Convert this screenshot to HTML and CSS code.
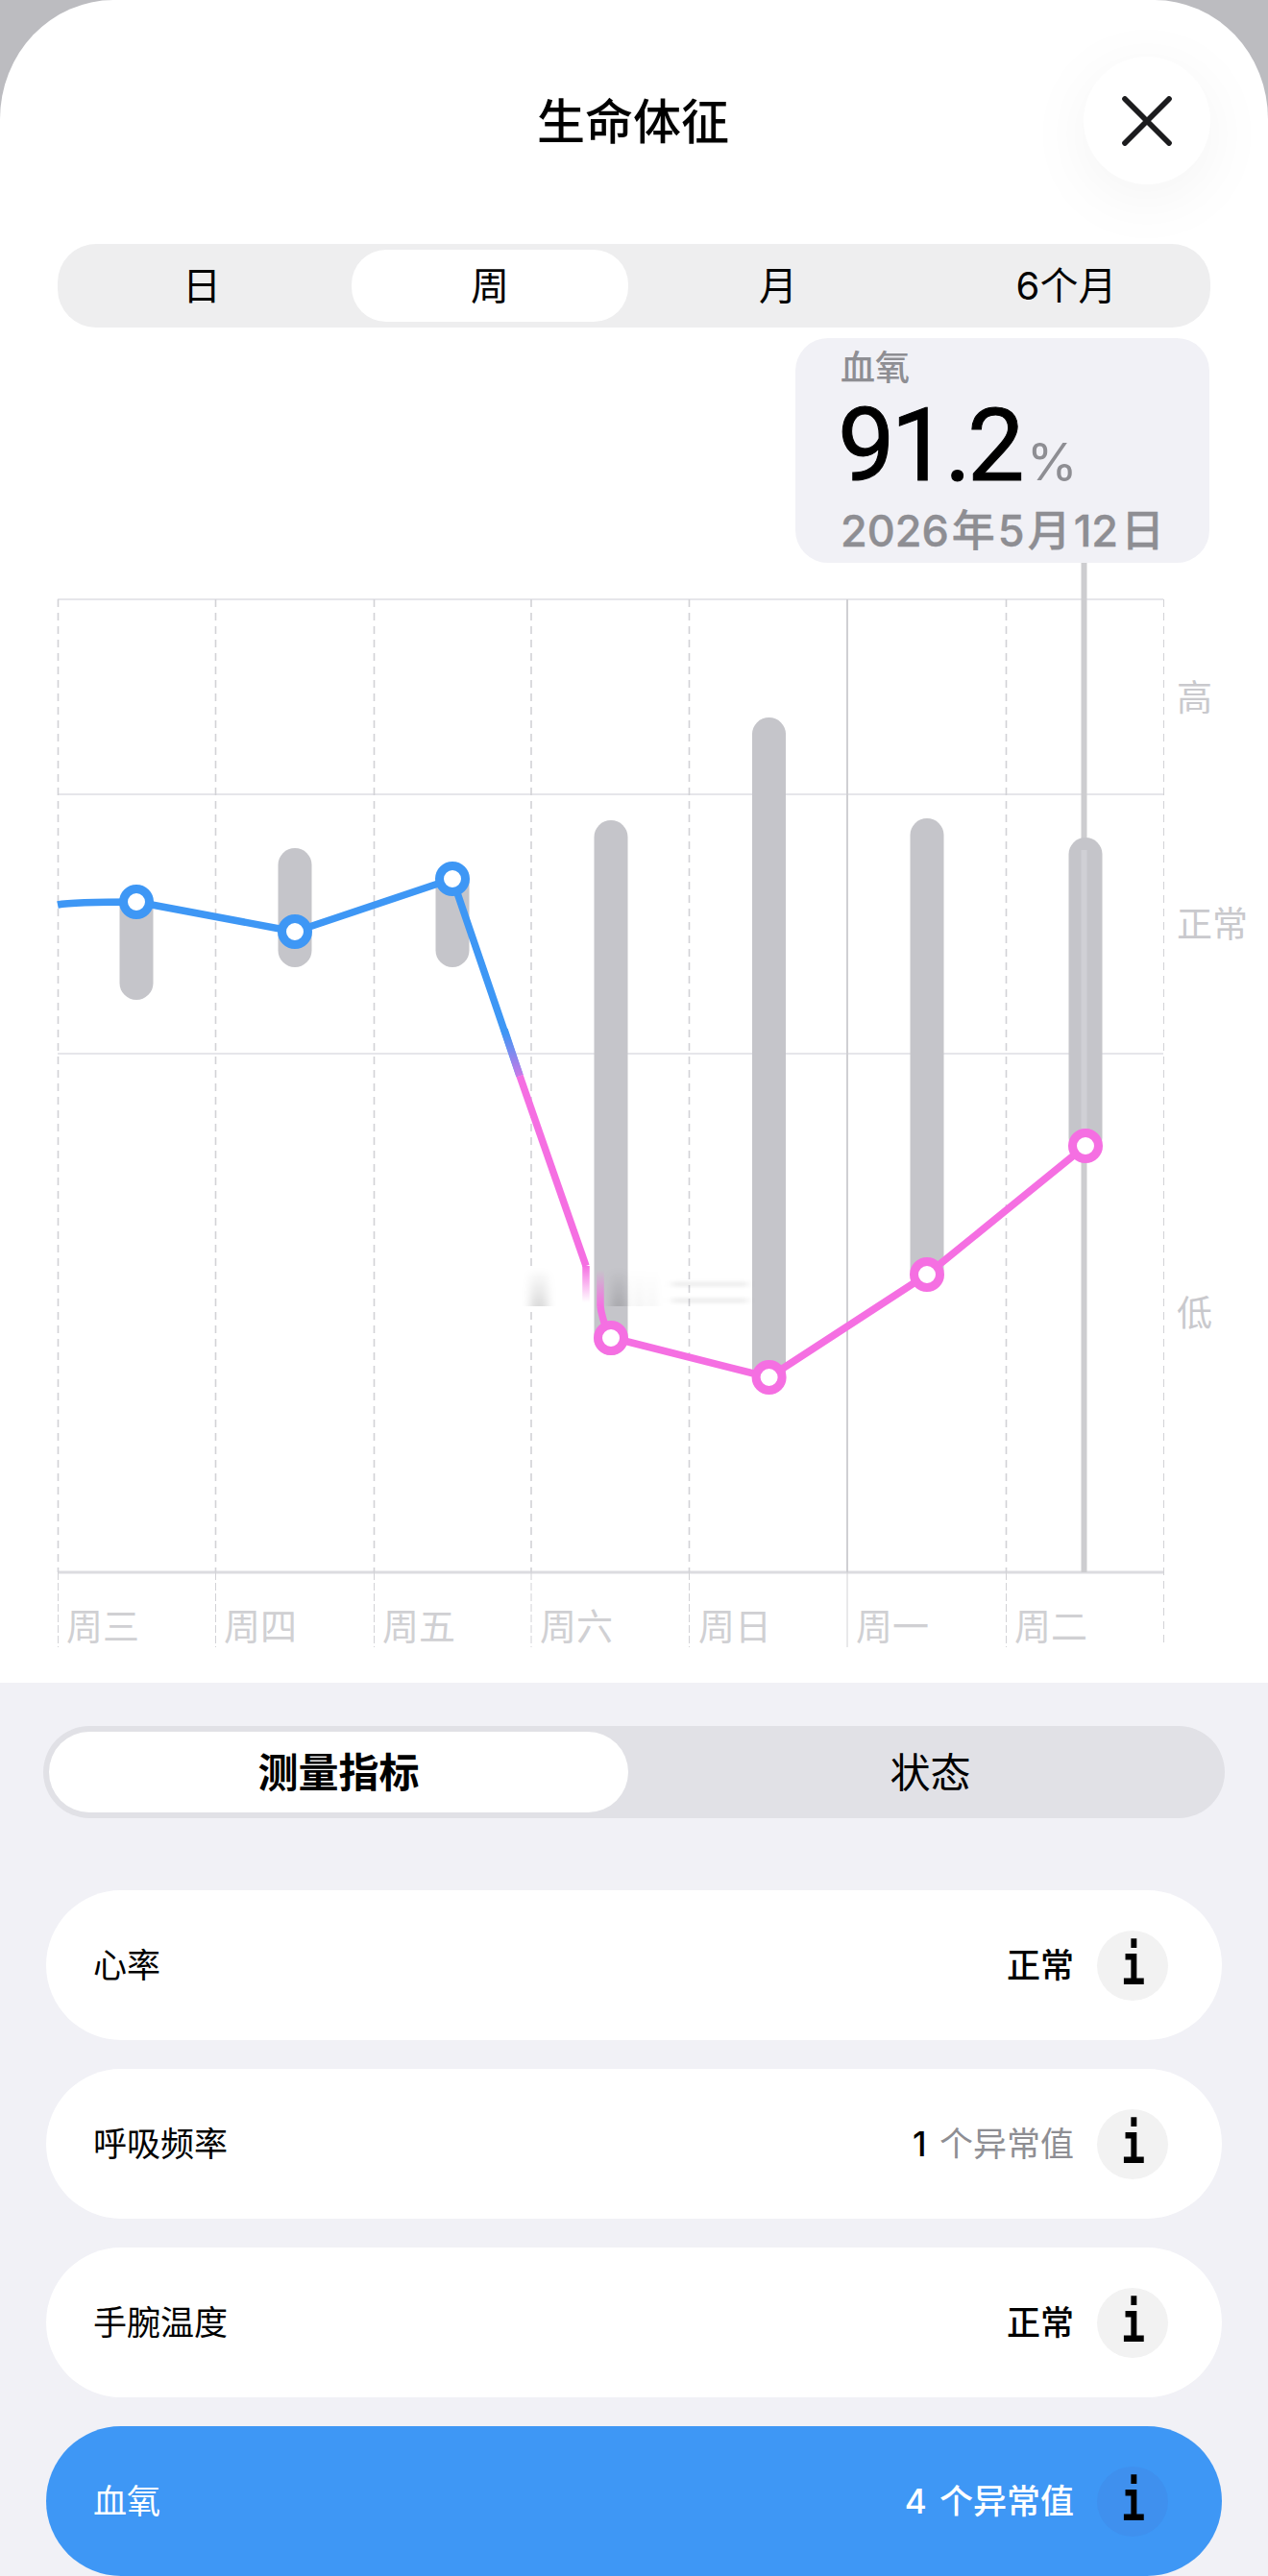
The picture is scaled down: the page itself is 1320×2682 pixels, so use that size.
FILE: index.html
```html
<!DOCTYPE html>
<html lang="zh-CN">
<head>
<meta charset="utf-8">
<title>生命体征</title>
<link rel="stylesheet" href="styles.css">
</head>
<body>
<div class="page">
  <section class="sheet">
    <header class="head">
      <h1 class="title">生命体征</h1>
      <button class="close" aria-label="关闭">
        <svg class="close-icon" viewBox="0 0 52 52"><path d="M3 3 L49 49 M49 3 L3 49"/></svg>
      </button>
    </header>
    <nav class="range">
      <span class="range-item">日</span>
      <span class="range-item range-on">周</span>
      <span class="range-item">月</span>
      <span class="range-item">6个月</span>
    </nav>
    <aside class="tip">
      <div class="tip-name">血氧</div>
      <div class="tip-value">91.2<span class="tip-unit">%</span></div>
      <div class="tip-date">2026 年 5 月 12 日</div>
    </aside>
    <svg class="chart" width="1320" height="1166" viewBox="0 586 1320 1166">
      <defs>
        <linearGradient id="drop" gradientUnits="userSpaceOnUse" x1="0" y1="1075" x2="0" y2="1135">
          <stop offset="0" stop-color="#3e97f5"/>
          <stop offset="1" stop-color="#f56fe2"/>
        </linearGradient>
        <linearGradient id="fadeA" gradientUnits="userSpaceOnUse" x1="0" y1="1318" x2="0" y2="1356">
          <stop offset="0" stop-color="#f56fe2"/>
          <stop offset="1" stop-color="#f56fe2" stop-opacity="0"/>
        </linearGradient>
        <linearGradient id="fadeB" gradientUnits="userSpaceOnUse" x1="0" y1="1322" x2="0" y2="1360">
          <stop offset="0" stop-color="#f56fe2" stop-opacity="0"/>
          <stop offset="1" stop-color="#f56fe2"/>
        </linearGradient>
        <linearGradient id="smear" gradientUnits="userSpaceOnUse" x1="0" y1="1320" x2="0" y2="1362">
          <stop offset="0" stop-color="#000" stop-opacity="0"/>
          <stop offset="1" stop-color="#000" stop-opacity=".15"/>
        </linearGradient>
        <filter id="soft" x="-30%" y="-30%" width="160%" height="160%"><feGaussianBlur stdDeviation="5 1.5"/></filter>
        <clipPath id="smudge-box"><rect x="535" y="1320" width="260" height="40"/></clipPath>
      </defs>

      <g class="grid-h">
        <path d="M60 624H1211M60 827H1211M60 1097H1211"/>
        <path class="grid-base" d="M60 1637H1211"/>
      </g>
      <g class="grid-v">
        <path d="M60.5 624V1637M224.5 624V1637M389.5 624V1637M553 624V1637M717.5 624V1637M1047.5 624V1637"/>
        <path class="grid-edge" d="M1211.5 624V1715"/>
        <path class="grid-solid" d="M882 624V1637"/>
        <path class="grid-foot" d="M60.5 1637V1715M224.5 1637V1715M389.5 1637V1715M553 1637V1715M717.5 1637V1715M1047.5 1637V1715"/>
        <path class="grid-foot-solid" d="M882 1637V1715"/>
      </g>

      <path class="cursor" d="M1128.5 586V1637"/>

      <g class="bars">
        <rect x="124.5" y="922" width="35" height="119" rx="17.5"/>
        <rect x="289.5" y="883" width="35" height="124" rx="17.5"/>
        <rect x="453.5" y="898" width="35" height="109" rx="17.5"/>
        <rect x="618.5" y="854" width="35" height="557" rx="17.5"/>
        <rect x="783" y="747" width="35" height="700" rx="17.5"/>
        <rect x="947.5" y="852" width="35" height="488" rx="17.5"/>
        <rect x="1112.5" y="872" width="35" height="330" rx="17.5"/>
      </g>
      <path class="cursor-over" d="M1128.5 885V1180"/>

      <g clip-path="url(#smudge-box)">
        <rect class="smudge-erase" x="546" y="1320" width="14" height="40"/>
        <g filter="url(#soft)">
          <rect x="552" y="1320" width="18" height="46" fill="url(#smear)"/>
          <rect x="636" y="1320" width="16" height="46" fill="url(#smear)"/>
          <rect x="662" y="1320" width="6" height="46" fill="url(#smear)" opacity=".5"/>
          <rect x="676" y="1320" width="6" height="46" fill="url(#smear)" opacity=".4"/>
          <rect x="700" y="1334" width="78" height="6" fill="#000" opacity=".06"/>
          <rect x="700" y="1351" width="78" height="6" fill="#000" opacity=".06"/>
        </g>
      </g>

      <path class="line line-blue" d="M60 942 Q75 939 142 939 L307 970 L471 915 L541 1120"/>
      <path class="line" stroke="url(#drop)" d="M525 1072 L541 1120"/>
      <path class="line line-pink" d="M541 1120 L610 1318"/>
      <path class="line" stroke="url(#fadeA)" d="M610 1318 V1356"/>
      <path class="line" stroke="url(#fadeB)" d="M625 1322 V1360"/>
      <path class="line line-pink" d="M625 1360 Q626 1370 634 1392 L800.6 1434 L965 1327 L1130 1193"/>

      <g class="dot dot-blue">
        <circle cx="142" cy="939" r="13.5"/>
        <circle cx="307" cy="970" r="13.5"/>
        <circle cx="471" cy="915" r="13.5"/>
      </g>
      <g class="dot dot-pink">
        <circle cx="636" cy="1393" r="13.5"/>
        <circle cx="800.6" cy="1434" r="13.5"/>
        <circle cx="965" cy="1327" r="13.5"/>
        <circle cx="1130" cy="1193" r="13.5"/>
      </g>

      <g class="axis-y">
        <text x="1225" y="740">高</text>
        <text x="1225" y="976">正常</text>
        <text x="1225" y="1381">低</text>
      </g>
      <g class="axis-x">
        <text x="69" y="1707">周三</text>
        <text x="233" y="1707">周四</text>
        <text x="398" y="1707">周五</text>
        <text x="562" y="1707">周六</text>
        <text x="727" y="1707">周日</text>
        <text x="891" y="1707">周一</text>
        <text x="1056" y="1707">周二</text>
      </g>
    </svg>
  </section>

  <section class="lower">
    <nav class="tabs">
      <span class="tab tab-on">测量指标</span>
      <span class="tab tab-off">状态</span>
    </nav>
    <ul class="rows">
      <li class="row">
        <span class="row-name">心率</span>
        <span class="row-value">正常</span>
        <span class="info"><span class="info-i">i</span></span>
      </li>
      <li class="row">
        <span class="row-name">呼吸频率</span>
        <span class="row-value"><span class="row-num">1</span> <span class="row-muted">个异常值</span></span>
        <span class="info"><span class="info-i">i</span></span>
      </li>
      <li class="row">
        <span class="row-name">手腕温度</span>
        <span class="row-value">正常</span>
        <span class="info"><span class="info-i">i</span></span>
      </li>
      <li class="row row-on">
        <span class="row-name">血氧</span>
        <span class="row-value">4 个异常值</span>
        <span class="info"><span class="info-i">i</span></span>
      </li>
    </ul>
  </section>
</div>
</body>
</html>
```
FILE: styles.css
```css
* { box-sizing: border-box; }
html, body { margin: 0; padding: 0; }
body {
  width: 1320px;
  height: 2682px;
  overflow: hidden;
  background: #bcbcc0;
  font-family: Inter, "Noto Sans CJK SC", sans-serif;
  color: #000;
}
.page { display: flex; flex-direction: column; height: 2682px; overflow: hidden; }

.sheet {
  height: 1752px;
  flex: none;
  background: #fff;
  border-radius: 118px 118px 0 0 / 124px 124px 0 0;
  display: flex;
  flex-direction: column;
}

.head { height: 254px; flex: none; display: flex; align-items: center; justify-content: center; position: relative; }
.title { margin: 0 2px 0 0; font-size: 50px; line-height: 60px; font-weight: 500; }
.close {
  position: absolute;
  right: 60px;
  top: 59px;
  width: 132px;
  height: 133px;
  border: 0;
  padding: 0;
  border-radius: 50%;
  background: #fff;
  box-shadow: 0 14px 70px rgba(0, 0, 0, .05);
  display: flex;
  align-items: center;
  justify-content: center;
}
.close-icon { width: 52px; height: 52px; fill: none; stroke: #1c1c1e; stroke-width: 5.7; stroke-linecap: round; }

.range {
  margin: 0 60px;
  height: 87px;
  flex: none;
  padding: 6px 0;
  border-radius: 40px;
  background: #eeeeef;
  display: grid;
  grid-template-columns: repeat(4, 1fr);
}
.range-item { display: flex; align-items: center; justify-content: center; font-size: 40px; margin: 0 6px; padding-bottom: 5px; font-weight: 400; }
.range-on { background: #fff; border-radius: 36px; }

.tip {
  margin: 11px 61px 0 auto;
  width: 431px;
  height: 234px;
  flex: none;
  padding: 8px 20px 0 47px;
  border-radius: 34px;
  background: #f1f1f6;
  color: #8e8e93;
}
.tip-name { font-family: Roboto, "Noto Sans CJK SC", sans-serif; font-size: 36px; line-height: 48px; font-weight: 500; }
.tip-value { margin-left: -3px; font-family: Roboto, sans-serif; font-size: 106px; line-height: 112px; color: #000; font-weight: 400; letter-spacing: -4px; white-space: nowrap; -webkit-text-stroke: 1px #000; }
.tip-unit { font-family: Inter, sans-serif; font-size: 54px; color: #8e8e93; font-weight: 400; letter-spacing: 0; margin-left: 6px; -webkit-text-stroke: 0; }
.tip-date { font-size: 45px; line-height: 32px; font-weight: 500; white-space: nowrap; word-spacing: -9px; -webkit-text-stroke: .4px #8e8e93; }

.chart { display: block; flex: none; }
.grid-h path { fill: none; stroke: #e6e6ea; stroke-width: 2; }
.grid-h .grid-base { stroke: #dcdce0; stroke-width: 3; }
.grid-v path { fill: none; stroke: #d2d2d6; stroke-width: 1.6; stroke-dasharray: 8 6; }
.grid-v .grid-edge { stroke-width: 1; }
.grid-v .grid-solid { stroke: #cfcfd3; stroke-width: 2; stroke-dasharray: none; }
.grid-v .grid-foot { stroke-width: 1; stroke-dasharray: 8 3; }
.grid-v .grid-foot-solid { stroke-width: 1; stroke-dasharray: none; }
.cursor { fill: none; stroke: #cdcdd0; stroke-width: 6; }
.cursor-over { fill: none; stroke: #d0d0d5; stroke-width: 6; }
.bars rect { fill: #c5c5ca; }
.smudge-erase { fill: #fff; }
.line { fill: none; stroke-width: 7.5; }
.line-blue { stroke: #3e97f5; stroke-linejoin: round; }
.line-pink { stroke: #f56fe2; stroke-linejoin: round; }
.dot circle { fill: #fff; stroke-width: 9; }
.dot-blue circle { stroke: #3e97f5; }
.dot-pink circle { stroke: #f56fe2; }
.axis-y text { font-size: 37px; fill: #c9c9cd; font-weight: 400; }
.axis-x text { font-size: 38px; fill: #d0d0d3; font-weight: 400; }

.lower { flex: 1; padding: 45px 45px 0; background: #f1f1f6; display: flex; flex-direction: column; min-height: 0; }
.tabs {
  height: 96px;
  flex: none;
  padding: 6px;
  border-radius: 48px;
  background: #e1e1e6;
  display: grid;
  grid-template-columns: 603px 1fr;
}
.tab { display: flex; align-items: center; justify-content: center; padding-bottom: 5px; font-size: 42px; font-weight: 400; }
.tab-off { padding-left: 14px; }
.tab-on { background: #fff; border-radius: 42px; font-weight: 700; }

.rows { list-style: none; margin: 75px 3px 0; padding: 0; display: flex; flex-direction: column; gap: 30px; }
.row {
  height: 156px;
  padding: 0 56px 0 49px;
  border-radius: 78px;
  background: #fff;
  display: flex;
  align-items: center;
  font-size: 35px;
  flex: none;
}
.row-name { flex: 1; padding-bottom: 5px; }
.row-value { margin-right: 24px; padding-bottom: 5px; white-space: nowrap; font-weight: 500; word-spacing: 4px; }
.row-num { font-weight: 500; }
.row-muted { color: #8e8e93; font-weight: 400; }
.info {
  width: 74px;
  height: 73px;
  border-radius: 50%;
  background: #f2f2f2;
  display: flex;
  align-items: center;
  justify-content: center;
  color: #000;
}
.info-i {
  display: block;
  font-family: "DejaVu Sans Mono", monospace;
  font-weight: 700;
  font-size: 58px;
  line-height: 1;
  transform: scaleX(.72);
}
.row-on { background: #3e97f5; color: #fff; }
.row-on .info { background: #3f90ee; color: #000; }
```
